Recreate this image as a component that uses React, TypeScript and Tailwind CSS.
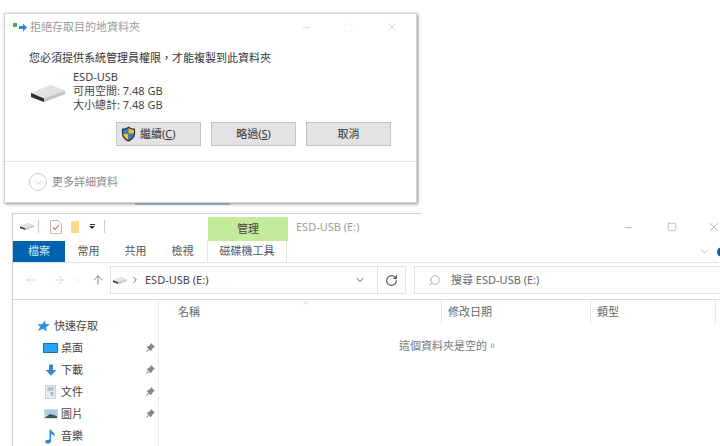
import React from 'react';
import { ArrowLeft, ArrowRight, ArrowUp, ChevronDown, ChevronRight, ChevronUp, Minus, RotateCw, Search, Square, X } from 'lucide-react';

const font = 'font-["Noto_Sans","Noto_Sans_CJK_TC",sans-serif]';

function DriveIcon({ className }: { className?: string }) {
  return (
    <svg viewBox="0 0 34 17" className={className}>
      <path d="M0 8 L20 0 L34 6 L34 9 L13 17 L0 12 Z" fill="#d4d4d4" />
      <path d="M0 8 L20 0 L34 6 L13 13.5 Z" fill="#e2e2e2" />
      <path d="M0 8 L13 13.5 L13 17 L0 12 Z" fill="#2e2e2e" />
      <path d="M13 13.5 L34 6 L34 9 L13 17 Z" fill="#c4c4c4" />
    </svg>
  );
}

function ShieldIcon() {
  return (
    <svg viewBox="0 0 16 17" className="h-[16px] w-[15px]">
      <path d="M8 .5 C10 2 12.5 2.8 15 3 V8 C15 12 12 15 8 16.5 C4 15 1 12 1 8 V3 C3.5 2.8 6 2 8 .5 Z" fill="#2a2f3a" />
      <path d="M8 2 V8.3 H2.2 V4 C4.2 3.8 6.2 3.2 8 2 Z" fill="#2f7fd6" />
      <path d="M8 2 C9.8 3.2 11.8 3.8 13.8 4 V8.3 H8 Z" fill="#f4c430" />
      <path d="M2.2 8.3 H8 V15 C4.8 13.8 2.6 11.4 2.2 8.3 Z" fill="#f4c430" />
      <path d="M8 8.3 H13.8 C13.4 11.4 11.2 13.8 8 15 Z" fill="#2f7fd6" />
    </svg>
  );
}

function DialogButton({ children, start }: { children: React.ReactNode; start?: boolean }) {
  return (
    <div className={`flex h-[24px] w-[85px] items-center gap-[4px] border border-[#c4c4c4] bg-[#e3e3e3] text-[11px] text-[#333] ${start ? 'justify-start pl-[4px]' : 'justify-center'}`}>
      {children}
    </div>
  );
}

function CopyDialog() {
  return (
    <div className="absolute left-[4px] top-[13px] z-10 flex h-[190px] w-[413px] flex-col border border-[#d4d4d4] bg-white shadow-[1px_1px_3px_rgba(0,0,0,0.45)]">
      <div className="flex h-[23px] shrink-0 items-center pl-[8px] pt-[3px]">
        <svg viewBox="0 0 14 10" className="h-[10px] w-[14px]">
          <rect x="0" y="1" width="4" height="4" fill="#3fb24a" />
          <path d="M6 4 H10 V1.5 L14 5.5 L10 9.5 V7 H6 Z" fill="#2b88d8" />
        </svg>
        <span className="ml-[3px] text-[11px] text-[#9a9a9a]">拒絕存取目的地資料夾</span>
        <div className="ml-auto flex items-center gap-[32px] pr-[17px] text-[#aaa]">
          <Minus size={11} strokeWidth={1} />
          <Square size={9} strokeWidth={0.8} className="text-[#ddd]" />
          <X size={14} strokeWidth={0.9} />
        </div>
      </div>
      <p className="ml-[24px] mt-[13px] text-[11px] leading-[16px] text-[#333]">您必須提供系統管理員權限，才能複製到此資料夾</p>
      <div className="mt-[4px] flex pl-[26px]">
        <DriveIcon className="mt-[15px] h-[17px] w-[34px]" />
        <div className="ml-[8px] text-[11px] leading-[14px] text-[#444]">
          <div>ESD-USB</div>
          <div>可用空間: 7.48 GB</div>
          <div>大小總計: 7.48 GB</div>
        </div>
      </div>
      <div className="ml-[111px] mt-[10px] flex gap-[10px]">
        <DialogButton start>
          <ShieldIcon />
          <span>繼續(<u>C</u>)</span>
        </DialogButton>
        <DialogButton>
          <span>略過(<u>S</u>)</span>
        </DialogButton>
        <DialogButton>取消</DialogButton>
      </div>
      <div className="mt-[15px] flex flex-1 items-center border-t border-[#e4e4e4] pl-[24px]">
        <div className="flex h-[18px] w-[18px] items-center justify-center rounded-full border border-[#cfcfcf] text-[#b0b0b0]">
          <ChevronDown size={11} strokeWidth={1.2} />
        </div>
        <span className="ml-[5px] text-[11px] text-[#8a8a8a]">更多詳細資料</span>
      </div>
    </div>
  );
}

function RibbonTab({ children, active }: { children: React.ReactNode; active?: boolean }) {
  return active ? (
    <div className="flex h-[21px] w-[52px] items-center justify-center bg-[#0063b1] text-[11px] text-[#cfe3f5]">{children}</div>
  ) : (
    <div className="flex h-[21px] w-[47px] items-center justify-center text-[11px] text-[#555]">{children}</div>
  );
}

function ToolbarTitle() {
  return (
    <div className="flex h-[28px] items-start">
      <div className="flex h-[27px] w-[195px] shrink-0 items-center pl-[7px]">
        <DriveIcon className="h-[7px] w-[14px]" />
        <div className="ml-[4px] h-[13px] w-px bg-[#ccc]" />
        <svg viewBox="0 0 12 14" className="ml-[11px] h-[14px] w-[12px]">
          <path d="M.5 .5 H8 L11.5 4 V13.5 H.5 Z" fill="#fff" stroke="#bbb" />
          <path d="M3 7.5 L5 9.5 L9 5" fill="none" stroke="#d0604f" strokeWidth="1.1" />
        </svg>
        <div className="ml-[9px] h-[12px] w-[8px] bg-[#f8dc8a]" />
        <div className="ml-[10px] flex flex-col items-center gap-[1px]">
          <div className="h-px w-[5px] bg-[#333]" />
          <div className="h-0 w-0 border-x-[3px] border-t-[3px] border-x-transparent border-t-[#333]" />
        </div>
        <div className="ml-[9px] h-[13px] w-px bg-[#ccc]" />
      </div>
      <div className="mt-[4px] flex h-[24px] w-[80px] shrink-0 items-center justify-center bg-[#c3eb9b] text-[11px] text-[#444]">管理</div>
      <span className="ml-[8px] mt-[4px] text-[11px] leading-[20px] text-[#9d9d9d]">ESD-USB (E:)</span>
      <div className="ml-auto flex h-[28px] items-center gap-[30px] text-[#777]">
        <Minus size={11} strokeWidth={1} className="mr-[3px]" />
        <Square size={10} strokeWidth={1} />
        <X size={14} strokeWidth={0.9} className="mr-[-1px]" />
      </div>
    </div>
  );
}

function Ribbon() {
  return (
    <div className="flex h-[22px] items-start border-b border-[#e4e4e4]">
      <RibbonTab active>檔案</RibbonTab>
      <RibbonTab>常用</RibbonTab>
      <RibbonTab>共用</RibbonTab>
      <RibbonTab>檢視</RibbonTab>
      <div className="ml-[1px] flex h-[21px] w-[80px] items-center justify-center border-x border-[#e4e4e4] text-[11px] text-[#555]">磁碟機工具</div>
      <div className="ml-auto flex h-[21px] items-center gap-[6px]">
        <ChevronDown size={13} strokeWidth={1} className="text-[#888]" />
        <div className="mr-[-4px] h-[10px] w-[7px] rounded-l-full bg-[#0063b1]" />
      </div>
    </div>
  );
}

function AddressBar() {
  return (
    <div className="flex h-[37px] items-center border-b border-[#dcdcdc] pb-[2px]">
      <div className="flex w-[97px] shrink-0 items-center pl-[11px] text-[#c8c8c8]">
        <ArrowLeft size={14} strokeWidth={1.2} />
        <ArrowRight size={14} strokeWidth={1.2} className="ml-[14px]" />
        <ChevronDown size={8} strokeWidth={1.2} className="ml-[8px]" />
        <ArrowUp size={14} strokeWidth={1.2} className="ml-[9px] text-[#555]" />
      </div>
      <div className="flex h-[28px] w-[296px] shrink-0 items-center border border-[#e2e2e2]">
        <DriveIcon className="ml-[2px] h-[7px] w-[14px]" />
        <ChevronRight size={10} strokeWidth={2} className="ml-[3px] text-[#555]" />
        <span className="ml-[5px] text-[11px] text-[#444]">ESD-USB (E:)</span>
        <ChevronDown size={12} strokeWidth={2} className="ml-auto mr-[11px] text-[#555]" />
        <div className="flex h-full w-[28px] items-center justify-center border-l border-[#e2e2e2]">
          <RotateCw size={13} strokeWidth={2} className="text-[#555]" />
        </div>
      </div>
      <div className="ml-[8px] flex h-[28px] flex-1 items-center border border-[#e2e2e2] border-r-0 pl-[13px]">
        <Search size={13} strokeWidth={1} className="-scale-x-100 text-[#777]" />
        <span className="ml-[10px] text-[11px] text-[#666]">搜尋 ESD-USB (E:)</span>
      </div>
    </div>
  );
}

function NavRow({ icon, label, pinned }: { icon: React.ReactNode; label: string; pinned?: boolean }) {
  return (
    <div className="flex h-[22px] items-center pl-[29px] pr-[3px] text-[11px] text-[#444]">
      <div className="flex w-[17px] justify-center">{icon}</div>
      <span className="ml-[2px]">{label}</span>
      {pinned && (
        <svg viewBox="0 0 10 10" className="ml-auto h-[10px] w-[10px]">
          <path d="M6 0 L10 4 L8.5 4.5 L6.5 7 L6 8.5 L1.5 4 L3 3.5 L5.5 1.5 Z M3 6 L.5 9.5 L4 7 Z" fill="#888" />
        </svg>
      )}
    </div>
  );
}

function Sidebar() {
  return (
    <div className="h-full w-[146px] shrink-0 border-r border-[#ededed] pt-[15px]">
      <div className="flex h-[22px] items-center pl-[24px] text-[11px] text-[#444]">
        <svg viewBox="0 0 13 12" className="h-[12px] w-[13px]">
          <path d="M8 .5 L8.6 4 L12.8 4.6 L9 7.2 L9.6 11.5 L6 8.7 L.8 11 L3.2 7 L.5 4 L5 4.2 Z" fill="#2f93dd" />
        </svg>
        <span className="ml-[4px]">快速存取</span>
      </div>
      <NavRow pinned label="桌面" icon={<div className="h-[10px] w-[15px] border border-[#1a6fb5] bg-[#29a4f2]" />} />
      <NavRow
        pinned
        label="下載"
        icon={
          <svg viewBox="0 0 12 12" className="h-[12px] w-[12px]">
            <path d="M4 .5 H8 V6 H11.5 L6 11.5 L.5 6 H4 Z" fill="#3c86cf" />
          </svg>
        }
      />
      <NavRow
        pinned
        label="文件"
        icon={
          <svg viewBox="0 0 11 14" className="h-[14px] w-[11px]">
            <rect x=".5" y=".5" width="10" height="13" fill="#ececec" stroke="#d0d0d0" />
            <path d="M2.5 3 H8.5 M2.5 5 H8.5 M5 8 H8.5 M6 10 H8.5" stroke="#6f97b5" />
          </svg>
        }
      />
      <NavRow
        pinned
        label="圖片"
        icon={
          <svg viewBox="0 0 14 10" className="h-[10px] w-[14px]">
            <rect width="14" height="10" fill="#d5dde3" />
            <rect x="1" y="1" width="12" height="5" fill="#a9cde6" />
            <path d="M1 8.5 L6 5 L13 7 V9 H1 Z" fill="#3b5a50" />
          </svg>
        }
      />
      <NavRow
        label="音樂"
        icon={
          <svg viewBox="0 0 11 15" className="h-[15px] w-[11px]">
            <path d="M4.5 .5 H6 C6.3 3 10.5 3.5 10 8 C9.3 6 8 5.5 6 5.2 V12 C6 13.8 4.5 14.8 2.8 14.8 C1.2 14.8 .3 14 .3 12.8 C.3 11.3 2.2 10.3 4.5 10.8 Z" fill="#2b88d8" />
          </svg>
        }
      />
    </div>
  );
}

function ColumnHead({ label, width }: { label: string; width: string }) {
  return <div className={`flex h-[24px] shrink-0 items-center border-r border-[#e6e6e6] pl-[6px] text-[11px] text-[#666] ${width}`}>{label}</div>;
}

function FileList() {
  return (
    <div className="flex h-full min-w-0 flex-1 flex-col">
      <div className="relative flex">
        <ChevronUp size={10} strokeWidth={1} className="absolute left-[142px] top-[-2px] text-[#888]" />
        <ColumnHead label="名稱" width="w-[283px] pl-[19px]" />
        <ColumnHead label="修改日期" width="w-[149px]" />
        <ColumnHead label="類型" width="w-[125px]" />
      </div>
      <p className="mt-[14px] w-[577px] pl-[2px] text-center text-[11px] text-[#777]">這個資料夾是空的。</p>
    </div>
  );
}

function ExplorerWindow() {
  return (
    <div className="absolute left-[12px] top-[213px] flex h-[233px] w-[708px] flex-col overflow-hidden border-l border-[#c9c9c9] bg-white">
      <div className="absolute left-0 top-0 h-px w-[408px] bg-[#cfcfcf]" />
      <ToolbarTitle />
      <Ribbon />
      <AddressBar />
      <div className="flex min-h-0 flex-1">
        <Sidebar />
        <FileList />
      </div>
    </div>
  );
}

export default function App() {
  return (
    <div className={`relative h-[446px] w-[720px] overflow-hidden bg-white ${font}`}>
      <div className="absolute left-[135px] top-[203px] h-[2px] w-[95px] bg-[#b9cfe0]" />
      <CopyDialog />
      <ExplorerWindow />
    </div>
  );
}
